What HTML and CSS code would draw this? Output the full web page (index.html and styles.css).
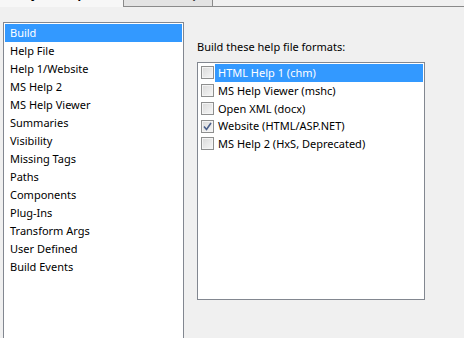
FILE: index.html
```
<!DOCTYPE html>
<html lang="en">
<head>
  <meta charset="UTF-8">
  <title>Project Properties - Build</title>
  <link rel="stylesheet" href="styles.css">
</head>
<body>
  <div class="tabstrip">
    <div class="tab tab-active">Project Properties</div>
    <div class="tab">Build Output</div>
    <div class="tab-rest"></div>
  </div>

  <div class="page">
    <ul class="categories">
      <li class="selected">Build</li>
      <li>Help File</li>
      <li>Help 1/Website</li>
      <li>MS Help 2</li>
      <li>MS Help Viewer</li>
      <li>Summaries</li>
      <li>Visibility</li>
      <li>Missing Tags</li>
      <li>Paths</li>
      <li>Components</li>
      <li>Plug-Ins</li>
      <li>Transform Args</li>
      <li>User Defined</li>
      <li>Build Events</li>
    </ul>

    <div class="panel">
      <div class="label">Build these help file formats:</div>
      <ul class="formats">
        <li class="selected"><span class="check"></span><span class="text">HTML Help 1 (chm)</span></li>
        <li><span class="check"></span><span class="text">MS Help Viewer (mshc)</span></li>
        <li><span class="check"></span><span class="text">Open XML (docx)</span></li>
        <li><span class="check checked">
          <svg width="9" height="9" viewBox="0 0 9 9"><path d="M1 4.5 L3.5 7.5 L8 1" fill="none" stroke="#4a5f8a" stroke-width="1.6"/></svg>
        </span><span class="text">Website (HTML/ASP.NET)</span></li>
        <li><span class="check"></span><span class="text">MS Help 2 (HxS, Deprecated)</span></li>
      </ul>
    </div>
  </div>
</body>
</html>
```

FILE: styles.css
```
body {
  margin: 0;
  background-color: #f0f0f0;
  font-family: "Noto Sans", "Open Sans", sans-serif;
  font-size: 11px;
  color: #000;
  overflow: hidden;
}

.tabstrip {
  display: flex;
  height: 21px;
  margin-top: -14px;
  overflow: hidden;
}
.tab {
  font-weight: bold;
  font-size: 12px;
  line-height: 16px;
  padding: 0 12px;
  box-sizing: border-box;
  height: 21px;
  white-space: nowrap;
  overflow: hidden;
}
.tab-active {
  width: 124px;
  background-color: #f7f7f7;
  border-right: 1px solid #8a8a8a;
}
.tab:not(.tab-active) {
  width: 89px;
  background-color: #e3e3e3;
  border-bottom: 1px solid #8a8a8a;
  border-right: 1px solid #8a8a8a;
  color: #444;
}
.tab-rest {
  flex: 1;
  border-bottom: 1px solid #8a8a8a;
}

.page {
  display: flex;
  box-sizing: border-box;
  height: 331px;
  overflow: hidden;
  padding: 15px 0 0 3px;
}

.categories {
  list-style: none;
  margin: 0;
  padding: 1px;
  width: 177px;
  height: 330px;
  flex-shrink: 0;
  background-color: #fff;
  border: 1px solid #828790;
}
.categories li {
  height: 18px;
  line-height: 18px;
  padding-left: 5px;
}
.categories li.selected {
  background-color: #3399ff;
  color: #fff;
}

.panel {
  margin-left: 13px;
}
.label {
  height: 18px;
  line-height: 18px;
  margin-top: 16px;
  margin-bottom: 6px;
}

.formats {
  list-style: none;
  margin: 0;
  padding: 1px 1px 0 0;
  width: 225px;
  height: 235px;
  background-color: #fff;
  border: 1px solid #828790;
}
.formats li {
  display: flex;
  align-items: center;
  height: 17.75px;
}
.formats .text {
  flex: 1;
  height: 100%;
  line-height: 17.75px;
  padding-left: 3px;
  margin-left: 1px;
}
.formats li.selected .text {
  background-color: #3399ff;
  color: #fff;
}
.check {
  display: flex;
  align-items: center;
  justify-content: center;
  box-sizing: border-box;
  width: 13px;
  height: 13px;
  margin-left: 3px;
  border: 1px solid #8e8f8f;
  background: linear-gradient(135deg, #d9d9d9, #f7f7f7);
  box-shadow: inset 0 0 0 1px #f4f4f4;
}
```
